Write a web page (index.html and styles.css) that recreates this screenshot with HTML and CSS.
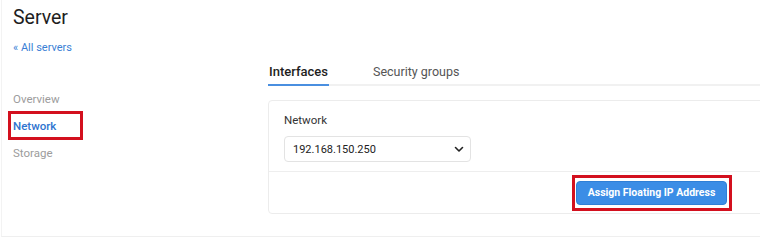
FILE: index.html
```html
<!DOCTYPE html>
<html>
<head>
<meta charset="utf-8">
<link rel="stylesheet" href="styles.css">
</head>
<body>
<div class="page">
  <h1 class="title">Server</h1>
  <a class="back" href="#">« All servers</a>
  <div class="layout">
    <nav class="sidebar">
      <div class="nav-item">Overview</div>
      <div class="nav-item active">Network<span class="mark mark-nav"></span></div>
      <div class="nav-item">Storage</div>
    </nav>
    <main class="content">
      <div class="tabs">
        <div class="tab active">Interfaces</div>
        <div class="tab">Security groups</div>
      </div>
      <div class="card">
        <div class="card-body">
          <div class="label">Network</div>
          <div class="select">
            <span>192.168.150.250</span>
            <svg class="chev" width="10" height="7" viewBox="0 0 10 7"><path d="M1.5 1.5 L5 5 L8.5 1.5" fill="none" stroke="#222" stroke-width="1.6" stroke-linecap="round" stroke-linejoin="round"/></svg>
          </div>
        </div>
        <div class="card-footer">
          <div class="btn-wrap">
            <button class="btn">Assign Floating IP Address</button>
            <span class="mark mark-btn"></span>
          </div>
        </div>
      </div>
    </main>
  </div>
</div>
</body>
</html>
```

FILE: styles.css
```css
html, body {
  margin: 0;
  padding: 0;
  background: #fff;
  overflow: hidden;
}
body {
  font-family: Roboto, "Noto Sans", sans-serif;
  color: #222;
  width: 760px;
  height: 239px;
}
.page {
  box-sizing: border-box;
  height: 237px;
  margin-left: 1px;
  border-left: 1px solid #f3f3f3;
  border-bottom: 1px solid #efefef;
  padding-left: 11px;
  width: 759px;
}
.title {
  margin: 0;
  padding-top: 6px;
  font-size: 19.5px;
  line-height: 24px;
  font-weight: 400;
  color: #1e1e1e;
}
.back {
  display: block;
  margin-top: 11px;
  font-size: 11px;
  line-height: 14px;
  color: #3a7fd5;
  text-decoration: none;
}
.layout {
  display: flex;
  margin-top: 5px;
}
.sidebar {
  width: 255px;
  flex: none;
  padding-top: 26px;
}
.nav-item {
  position: relative;
  font-size: 11.5px;
  line-height: 27px;
  color: #9c9c9c;
}
.nav-item.active {
  color: #2f74cf;
  font-weight: 500;
}
.mark {
  position: absolute;
  border: 3px solid #d3101e;
  box-sizing: border-box;
  pointer-events: none;
}
.mark-nav {
  left: -5px;
  top: -2px;
  width: 75px;
  height: 29px;
}
.content {
  flex: 1;
  min-width: 0;
  overflow: hidden;
}
.tabs {
  display: flex;
  gap: 43px;
  border-bottom: 2px solid #f1f1f1;
}
.tab {
  font-size: 13px;
  line-height: 16px;
  padding: 4px 0 4px 1px;
  color: #555;
}
.tab.active {
  color: #1e1e1e;
  font-weight: 500;
  border-bottom: 2px solid #4a8fe0;
  margin-bottom: -2px;
  padding-right: 1px;
}
.tab + .tab {
  font-size: 12.5px;
}
.card {
  margin-top: 14px;
  width: 520px;
  border: 1px solid #ececec;
  border-radius: 4px;
}
.card-body {
  padding: 11px 15px 9px;
  border-bottom: 1px solid #eeeeee;
}
.label {
  font-size: 11.5px;
  line-height: 16px;
  color: #333;
}
.select {
  margin-top: 8px;
  box-sizing: border-box;
  width: 187px;
  height: 26px;
  border: 1px solid #e3e3e3;
  border-radius: 4px;
  display: flex;
  align-items: center;
  justify-content: space-between;
  padding: 0 6px 0 8px;
  font-size: 11px;
  color: #222;
}
.chev {
  display: block;
}
.card-footer {
  height: 41px;
  display: flex;
  align-items: center;
  justify-content: flex-end;
  padding-right: 62px;
}
.btn-wrap {
  position: relative;
  display: flex;
}
.btn {
  font-family: Roboto, "Noto Sans", sans-serif;
  font-size: 10.5px;
  font-weight: 700;
  color: #fff;
  background: #3b8de6;
  border: 1px solid #2f7fd6;
  border-radius: 4px;
  width: 151px;
  height: 24px;
  padding: 0;
}
.mark-btn {
  left: -4px;
  top: -6px;
  width: 160px;
  height: 36px;
}
```
